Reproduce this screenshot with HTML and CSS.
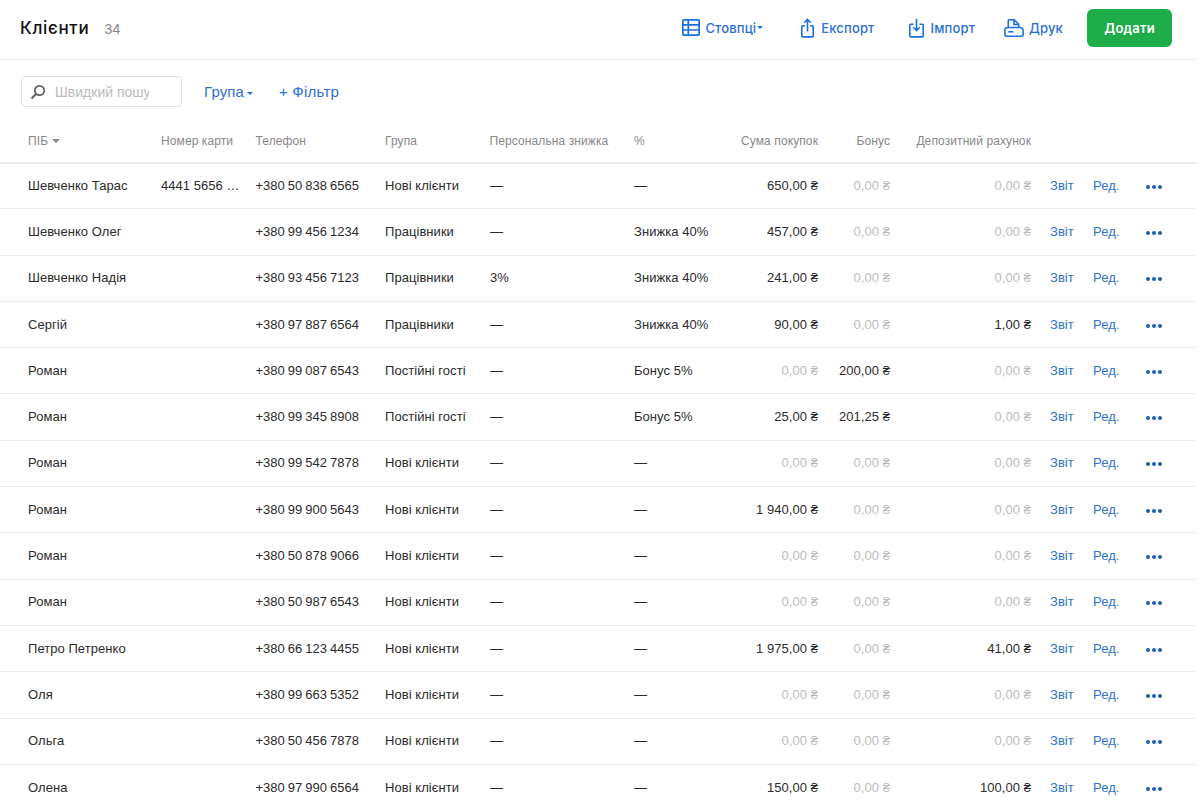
FILE: index.html
```html
<!DOCTYPE html>
<html lang="uk">
<head>
<meta charset="utf-8">
<title>Клієнти</title>
<link rel="stylesheet" href="styles.css">
</head>
<body>
<div class="page">
<header class="topbar">
  <div class="title-wrap"><h1 class="title">Клієнти</h1><span class="count">34</span></div>
  <nav class="actions">
    <a class="action act-cols"><svg class="ico" width="18" height="17" viewBox="0 0 18 17" fill="none" stroke="#1a6fe0" stroke-width="1.700"><rect x=".85" y=".85" width="16.300" height="15.300" rx=".8"/><path d="M.85 5.800h16.300M.85 11h16.300M6.300 .85v15.300"/></svg><span>Стовпці</span><i class="caret"></i></a>
    <a class="action act-exp"><svg class="ico" width="13" height="20" viewBox="0 0 13 20" fill="none" stroke="#1a6fe0" stroke-width="1.600"><path d="M4 7.800H1.800a1 1 0 0 0-1 1v9.100a1 1 0 0 0 1 1h9.400a1 1 0 0 0 1-1V8.800a1 1 0 0 0-1-1H9"/><path d="M6.500 13.500V1.500M3.300 4.700 6.500 1.400l3.200 3.300"/></svg><span>Експорт</span></a>
    <a class="action act-imp"><svg class="ico" width="15" height="20" viewBox="0 0 15 20" fill="none" stroke="#1a6fe0" stroke-width="1.600"><path d="M4.500 6.300H1.800a1 1 0 0 0-1 1v10.600a1 1 0 0 0 1 1h11.400a1 1 0 0 0 1-1V7.300a1 1 0 0 0-1-1H10.500"/><path d="M7.500 .8v11.700M4.300 9.300l3.200 3.300 3.200-3.300"/></svg><span>Імпорт</span></a>
    <a class="action act-print"><svg class="ico" width="20" height="18" viewBox="0 0 20 18" fill="none" stroke="#1a6fe0" stroke-width="1.600"><path d="M4.300 8.500V1.800a1 1 0 0 1 1-1h4.900l4.500 4.500v3.200"/><path d="M10 1v4.500h4.500"/><path d="M.9 11.300a2.800 2.800 0 0 1 2.800-2.800h12.600a2.800 2.800 0 0 1 2.800 2.800v4.400a1.500 1.500 0 0 1-1.500 1.500H2.400a1.500 1.500 0 0 1-1.500-1.500z"/><path d="M4.300 12.800h5"/></svg><span>Друк</span></a>
    <button class="add">Додати</button>
  </nav>
</header>
<section class="filters">
  <label class="search"><svg width="16" height="16" viewBox="0 0 16 16" fill="none" stroke="#5f5f5f" stroke-width="1.700"><circle cx="9.500" cy="6.500" r="4.700"/><path d="M6 10 1.500 14.500" stroke-width="2"/></svg><span class="ph">Швидкий пошу</span></label>
  <a class="flt">Група<i class="caret"></i></a>
  <a class="flt flt-add">+ Фільтр</a>
</section>
<table class="grid">
  <colgroup><col class="c1"><col class="c2"><col class="c3"><col class="c4"><col class="c5"><col class="c6"><col class="c7"><col class="c8"><col class="c9"><col class="c10"><col class="c11"><col class="c12"></colgroup>
  <thead><tr><th>ПІБ<i class="caret caret-g"></i></th><th>Номер карти</th><th>Телефон</th><th>Група</th><th>Персональна знижка</th><th>%</th><th class="r">Сума покупок</th><th class="r">Бонус</th><th class="r">Депозитний рахунок</th><th></th><th></th><th></th></tr></thead>
  <tbody id="rows"></tbody>
</table>
</div>
<script src="rows.js"></script>
</body>
</html>
```
FILE: rows.js
```js
var data = [
["Шевченко Тарас","4441 5656 …","+380 50 838 6565","Нові клієнти","—","—","650,00","0,00","0,00"],
["Шевченко Олег","","+380 99 456 1234","Працівники","—","Знижка 40%","457,00","0,00","0,00"],
["Шевченко Надія","","+380 93 456 7123","Працівники","3%","Знижка 40%","241,00","0,00","0,00"],
["Сергій","","+380 97 887 6564","Працівники","—","Знижка 40%","90,00","0,00","1,00"],
["Роман","","+380 99 087 6543","Постійні гості","—","Бонус 5%","0,00","200,00","0,00"],
["Роман","","+380 99 345 8908","Постійні гості","—","Бонус 5%","25,00","201,25","0,00"],
["Роман","","+380 99 542 7878","Нові клієнти","—","—","0,00","0,00","0,00"],
["Роман","","+380 99 900 5643","Нові клієнти","—","—","1 940,00","0,00","0,00"],
["Роман","","+380 50 878 9066","Нові клієнти","—","—","0,00","0,00","0,00"],
["Роман","","+380 50 987 6543","Нові клієнти","—","—","0,00","0,00","0,00"],
["Петро Петренко","","+380 66 123 4455","Нові клієнти","—","—","1 975,00","0,00","41,00"],
["Оля","","+380 99 663 5352","Нові клієнти","—","—","0,00","0,00","0,00"],
["Ольга","","+380 50 456 7878","Нові клієнти","—","—","0,00","0,00","0,00"],
["Олена","","+380 97 990 6564","Нові клієнти","—","—","150,00","0,00","100,00"]
];
function money(v){return '<td class="r'+(v==="0,00"?' zero':'')+'">'+v+' ₴</td>';}
document.getElementById("rows").innerHTML = data.map(function(d){
  return "<tr><td>"+d[0]+"</td><td>"+d[1]+'</td><td class="phone">'+d[2]+"</td><td>"+d[3]+"</td><td>"+d[4]+"</td><td>"+d[5]+"</td>"+money(d[6])+money(d[7])+money(d[8])+'<td class="lnk">Звіт</td><td class="lnk">Ред.</td><td class="dots"><span></span><span></span><span></span></td></tr>';
}).join("");
```
FILE: styles.css
```css
* { box-sizing: border-box; }
html, body { margin: 0; padding: 0; background: #fff; overflow: hidden; }
body { font-family: "Liberation Sans", Arial, sans-serif; color: #2b2b2b; height: 809px; }
.page { width: 1196px; }
.topbar { height: 60px; display: flex; align-items: center; justify-content: space-between; padding: 0 24px 4px 20px; border-bottom: 1px solid #e9e9e9; }
.title-wrap { display: flex; align-items: baseline; }
.title { margin: 0; font: 500 17px Inter, sans-serif; color: #111; letter-spacing: .7px; }
.count { margin-left: 15px; font: 14px "Liberation Sans", sans-serif; color: #888; letter-spacing: .3px; }
.actions { display: flex; align-items: center; }
.action { display: flex; align-items: center; font: 500 13px Inter, sans-serif; color: #2a6fd6; letter-spacing: .15px; }
.act-cols { gap: 5px; margin-right: 38px; }
.act-cols .caret { margin-left: -4px; margin-top: -1px; }
.act-exp { gap: 7px; margin-right: 34px; }
.act-imp { gap: 7px; margin-right: 29px; }
.act-print { gap: 5px; margin-right: 24px; }
.caret { display: inline-block; width: 0; height: 0; border-left: 3px solid transparent; border-right: 3px solid transparent; border-top: 3px solid #2a6fd6; margin-left: 1px; }
.add { width: 85px; height: 38px; background: #1fad4a; color: #fff; border: 0; border-radius: 6px; font: 600 13px Inter, sans-serif; letter-spacing: .2px; }
.filters { display: flex; align-items: center; padding: 0 0 2px 21px; height: 65px; }
.search { width: 161px; height: 31px; border: 1px solid #e2e2e2; border-radius: 4px; display: flex; align-items: center; padding: 0 0 0 8px; }
.ph { margin-left: 9px; font-size: 14px; color: #bbb; width: 94px; overflow: hidden; white-space: nowrap; }
.flt { font-size: 15px; color: #2a6fd6; letter-spacing: .1px; }
.flt .caret { margin-left: 3px; vertical-align: 2px; }
.search + .flt { margin-left: 22px; }
.flt-add { margin-left: 26px; letter-spacing: .25px; }
.grid { border-collapse: collapse; table-layout: fixed; width: 1196px; font-size: 13px; }
.c1 { width: 153px; } .c2 { width: 95px; } .c3 { width: 129px; } .c4 { width: 105px; } .c5 { width: 144px; } .c6 { width: 92px; } .c7 { width: 108px; } .c8 { width: 72px; } .c9 { width: 141px; } .c10 { width: 43px; } .c11 { width: 53px; } .c12 { width: 61px; }
.grid th { height: 37.5px; padding: 0 8px 5px; font-weight: 400; font-size: 12px; letter-spacing: .1px; color: #888; text-align: left; white-space: nowrap; border-bottom: 2px solid #e9e9e9; }
.grid th:first-child, .grid td:first-child { padding-left: 28px; }
.grid th:nth-child(3), .grid th:nth-child(5) { padding-left: 7.500px; }
.grid th.r, .grid td.r { text-align: right; }
.caret-g { border-left-width: 4px; border-right-width: 4px; border-top: 4px solid #888; margin-left: 4px; vertical-align: 2px; }
.grid td { height: 46.3px; padding: 0 8px 1px; white-space: nowrap; overflow: hidden; border-bottom: 1px solid #e9e9e9; letter-spacing: .05px; }
.grid td.phone { letter-spacing: 0; word-spacing: -.6px; padding-left: 7.500px; }
.grid td.zero { color: #bdbdbd; }
.grid td.lnk { color: #2f74c8; padding-left: 11px; }
.grid td.dots { padding-left: 11px; }
.dots span { display: inline-block; width: 4px; height: 4px; border-radius: 50%; background: #1c5fb8; margin: 0 2px 0 0; vertical-align: 1px; }
```
